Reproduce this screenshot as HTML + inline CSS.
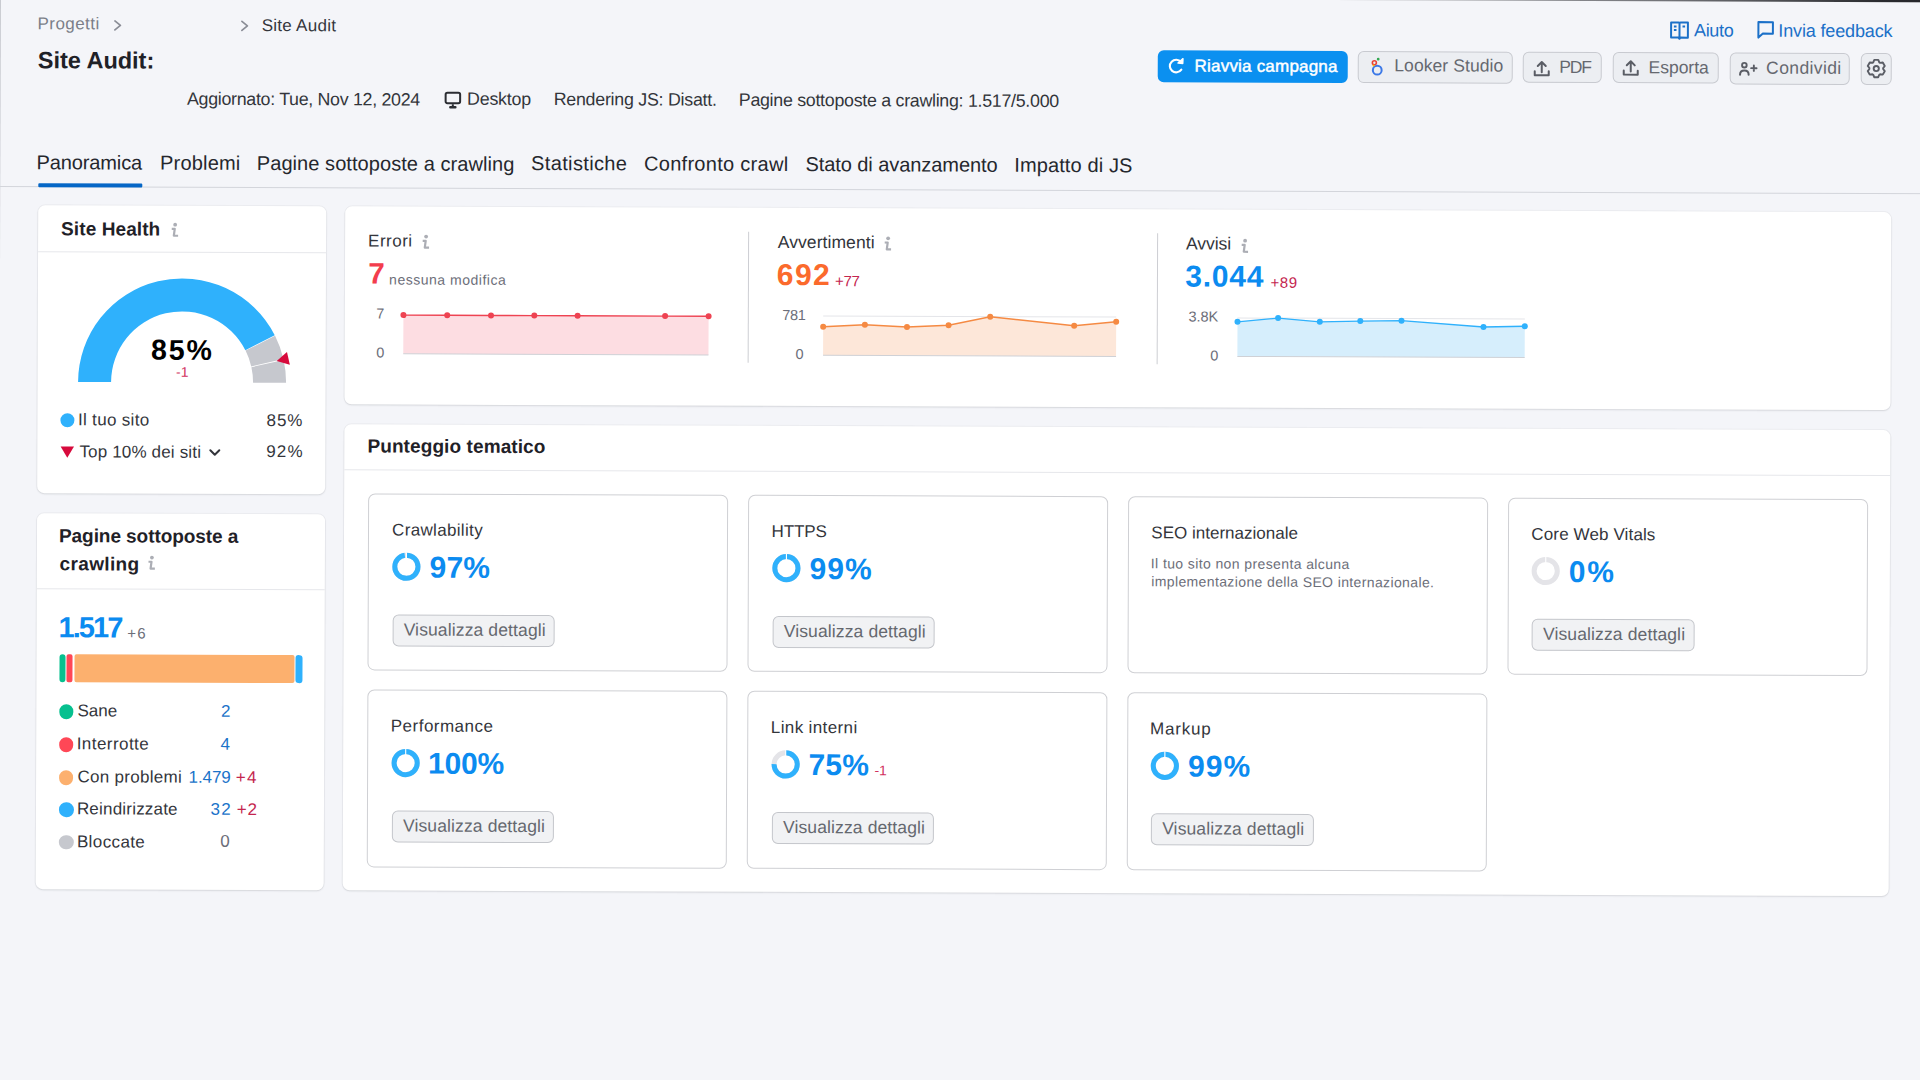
<!DOCTYPE html>
<html><head><meta charset="utf-8"><style>
html,body{margin:0;padding:0;width:1920px;height:1080px;overflow:hidden;background:#f4f5f9;}
#stage{position:absolute;left:0;top:0;width:1920px;height:1080px;transform:rotate(0.215deg);transform-origin:0 0;font-family:"Liberation Sans",sans-serif;background:#f4f5f9;}
.t{position:absolute;white-space:nowrap;line-height:1;}
</style></head><body><div id="stage">
<div style="position:absolute;left:-50.00px;top:-200.00px;width:2100.00px;height:194.60px;background:linear-gradient(90deg,#b8b9bd 0%,#a6a7ab 70%,#707176 82%,#2a2b2f 92%,#1a1a1e 100%);"></div>
<div style="position:absolute;left:0.00px;top:-10.00px;width:1.20px;height:1200.00px;background:#c9cbd1;"></div>
<div class="t" style="left:37.71px;top:15.35px;font-size:17px;color:#7b7e88;font-weight:400;letter-spacing:0.429px;">Progetti</div>
<svg style="position:absolute;left:113.07px;top:18.58px;overflow:visible;" width="10" height="12" viewBox="0 0 10 12"><polyline points="2,1.5 7.5,6 2,10.5" fill="none" stroke="#8a8d96" stroke-width="1.7" stroke-linecap="round" stroke-linejoin="round"/></svg>
<svg style="position:absolute;left:239.57px;top:18.60px;overflow:visible;" width="10" height="12" viewBox="0 0 10 12"><polyline points="2,1.5 7.5,6 2,10.5" fill="none" stroke="#8a8d96" stroke-width="1.7" stroke-linecap="round" stroke-linejoin="round"/></svg>
<div class="t" style="left:261.82px;top:15.74px;font-size:17px;color:#33353b;font-weight:400;letter-spacing:0.267px;">Site Audit</div>
<div class="t" style="left:38.06px;top:49.15px;font-size:23.5px;color:#1f2127;font-weight:700;letter-spacing:-0.020px;">Site Audit:</div>
<div class="t" style="left:187.40px;top:89.79px;font-size:17.8px;color:#33353b;font-weight:400;letter-spacing:-0.286px;">Aggiornato: Tue, Nov 12, 2024</div>
<svg style="position:absolute;left:445.35px;top:90.33px;overflow:visible;" width="17" height="18" viewBox="0 0 17 18"><rect x="1" y="1" width="14.5" height="10.5" rx="1.8" fill="none" stroke="#2b2d33" stroke-width="2"/><path d="M8.2 12.5 L8.2 14.5" stroke="#2b2d33" stroke-width="2"/><rect x="4.5" y="14.3" width="7.5" height="2.5" rx="1.2" fill="#2b2d33"/></svg>
<div class="t" style="left:467.40px;top:89.26px;font-size:17.8px;color:#33353b;font-weight:400;letter-spacing:-0.167px;">Desktop</div>
<div class="t" style="left:554.10px;top:89.05px;font-size:17.8px;color:#33353b;font-weight:400;letter-spacing:-0.240px;">Rendering JS: Disatt.</div>
<div class="t" style="left:739.20px;top:88.56px;font-size:17.8px;color:#33353b;font-weight:400;letter-spacing:-0.270px;">Pagine sottoposte a crawling: 1.517/5.000</div>
<svg style="position:absolute;left:1669.78px;top:14.74px;overflow:visible;" width="20" height="20" viewBox="0 0 20 20"><path d="M1.2 1.2 H8.6 Q9.6 1.2 9.6 2.2 V17.5 L8.6 16.3 H1.2 Z M18 1.2 H10.6 Q9.6 1.2 9.6 2.2 V17.5 L10.6 16.3 H18 Z" fill="none" stroke="#1b70c8" stroke-width="2" stroke-linejoin="round"/><path d="M4 5.2h2.6M4 8.7h2.6M12.6 5.2h2.6" stroke="#1b70c8" stroke-width="1.8"/></svg>
<div class="t" style="left:1694.14px;top:15.03px;font-size:18px;color:#1b70c8;font-weight:400;letter-spacing:-0.325px;">Aiuto</div>
<svg style="position:absolute;left:1757.08px;top:13.91px;overflow:visible;" width="18" height="20" viewBox="0 0 18 20"><path d="M1.5 1.5 H16 V13 H6 L1.5 17 Z" fill="none" stroke="#1b70c8" stroke-width="2" stroke-linejoin="round"/></svg>
<div class="t" style="left:1778.44px;top:14.77px;font-size:18px;color:#1b70c8;font-weight:400;letter-spacing:-0.146px;">Invia feedback</div>
<div style="position:absolute;left:1158.25px;top:46.30px;width:190.00px;height:32.00px;background:#0b90f0;border-radius:6px;"></div>
<svg style="position:absolute;left:1168.21px;top:52.62px;overflow:visible;" width="18" height="18" viewBox="0 0 18 18"><path d="M13.6 12.2 A6.3 6.3 0 1 1 13.2 4.6" fill="none" stroke="#fff" stroke-width="2.1" stroke-linecap="round"/><path d="M10.2 5.6 L15 6 L15.2 1.2 Z" fill="#fff" stroke="#fff" stroke-width="1.4" stroke-linejoin="round"/></svg>
<div class="t" style="left:1194.87px;top:52.86px;font-size:17px;color:#ffffff;font-weight:400;letter-spacing:0.200px;-webkit-text-stroke:0.45px #fff;">Riavvia campagna</div>
<div style="position:absolute;left:1358.25px;top:45.61px;width:155.00px;height:32.60px;background:#eceef2;border:1px solid #c8cad0;border-radius:6px;box-sizing:border-box;"></div>
<svg style="position:absolute;left:1369.71px;top:51.36px;overflow:visible;" width="18" height="22" viewBox="0 0 18 22"><circle cx="7.5" cy="14" r="4.4" fill="none" stroke="#3b78e7" stroke-width="2"/><circle cx="4.6" cy="6.6" r="2" fill="none" stroke="#ea4335" stroke-width="1.6"/><circle cx="8.4" cy="3" r="1.4" fill="#34a853"/><circle cx="3.8" cy="9.3" r="1" fill="#fbbc04"/></svg>
<div class="t" style="left:1394.57px;top:52.05px;font-size:17.5px;color:#65686f;font-weight:400;letter-spacing:0.075px;">Looker Studio</div>
<div style="position:absolute;left:1523.25px;top:46.14px;width:79.00px;height:31.30px;background:#eceef2;border:1px solid #c8cad0;border-radius:6px;box-sizing:border-box;"></div>
<svg style="position:absolute;left:1532.52px;top:53.55px;overflow:visible;" width="18" height="18" viewBox="0 0 18 18"><path d="M9 12.5 V2.2 M5 6.2 L9 2.2 L13 6.2" fill="none" stroke="#5a5d65" stroke-width="2" stroke-linecap="round" stroke-linejoin="round"/><path d="M2 11.5 V15.5 H16 V11.5" fill="none" stroke="#5a5d65" stroke-width="2" stroke-linecap="round" stroke-linejoin="round"/></svg>
<div class="t" style="left:1559.48px;top:52.77px;font-size:17.5px;color:#65686f;font-weight:400;letter-spacing:-1.150px;">PDF</div>
<div style="position:absolute;left:1612.76px;top:46.05px;width:106.50px;height:31.40px;background:#eceef2;border:1px solid #c8cad0;border-radius:6px;box-sizing:border-box;"></div>
<svg style="position:absolute;left:1621.62px;top:53.42px;overflow:visible;" width="18" height="18" viewBox="0 0 18 18"><path d="M9 12.5 V2.2 M5 6.2 L9 2.2 L13 6.2" fill="none" stroke="#5a5d65" stroke-width="2" stroke-linecap="round" stroke-linejoin="round"/><path d="M2 11.5 V15.5 H16 V11.5" fill="none" stroke="#5a5d65" stroke-width="2" stroke-linecap="round" stroke-linejoin="round"/></svg>
<div class="t" style="left:1648.88px;top:52.59px;font-size:17.5px;color:#65686f;font-weight:400;letter-spacing:-0.033px;">Esporta</div>
<div style="position:absolute;left:1730.26px;top:45.98px;width:120.00px;height:31.70px;background:#eceef2;border:1px solid #c8cad0;border-radius:6px;box-sizing:border-box;"></div>
<svg style="position:absolute;left:1738.73px;top:54.98px;overflow:visible;" width="22" height="18" viewBox="0 0 22 18"><circle cx="5.6" cy="3.6" r="2.3" fill="none" stroke="#5a5d65" stroke-width="1.9"/><path d="M1.3 13.2 Q1.3 8.9 5.6 8.9 Q9.9 8.9 9.9 13.2" fill="none" stroke="#5a5d65" stroke-width="2" stroke-linecap="round"/><path d="M15.1 3.9 V9.3 M12.4 6.6 H17.8" stroke="#5a5d65" stroke-width="1.9" stroke-linecap="round"/></svg>
<div class="t" style="left:1766.38px;top:52.52px;font-size:17.5px;color:#65686f;font-weight:400;letter-spacing:0.387px;">Condividi</div>
<div style="position:absolute;left:1860.66px;top:45.66px;width:31.60px;height:32.10px;background:#eceef2;border:1px solid #c8cad0;border-radius:6px;box-sizing:border-box;"></div>
<svg style="position:absolute;left:1866.92px;top:52.30px;overflow:visible;" width="19" height="19" viewBox="0 0 19 19"><path d="M6.48 3.30 L7.50 0.83 L11.50 0.83 L12.52 3.30 L13.36 3.78 L16.01 3.43 L18.01 6.90 L16.38 9.02 L16.38 9.98 L18.01 12.10 L16.01 15.57 L13.36 15.22 L12.52 15.70 L11.50 18.17 L7.50 18.17 L6.48 15.70 L5.64 15.22 L2.99 15.57 L0.99 12.10 L2.62 9.98 L2.62 9.02 L0.99 6.90 L2.99 3.43 L5.64 3.78 Z" fill="none" stroke="#5a5d65" stroke-width="1.9" stroke-linejoin="round"/><circle cx="9.5" cy="9.5" r="2.6" fill="none" stroke="#5a5d65" stroke-width="1.9"/></svg>
<div class="t" style="left:37.13px;top:151.73px;font-size:20px;color:#25272d;font-weight:400;letter-spacing:-0.111px;">Panoramica</div>
<div class="t" style="left:160.64px;top:151.62px;font-size:20px;color:#25272d;font-weight:400;letter-spacing:0.200px;">Problemi</div>
<div class="t" style="left:257.44px;top:151.62px;font-size:20px;color:#25272d;font-weight:400;letter-spacing:0.067px;">Pagine sottoposte a crawling</div>
<div class="t" style="left:531.74px;top:151.40px;font-size:20px;color:#25272d;font-weight:400;letter-spacing:0.360px;">Statistiche</div>
<div class="t" style="left:644.64px;top:151.38px;font-size:20px;color:#25272d;font-weight:400;letter-spacing:0.293px;">Confronto crawl</div>
<div class="t" style="left:806.04px;top:151.29px;font-size:20px;color:#25272d;font-weight:400;letter-spacing:-0.063px;">Stato di avanzamento</div>
<div class="t" style="left:1014.85px;top:151.14px;font-size:20px;color:#25272d;font-weight:400;letter-spacing:0.125px;">Impatto di JS</div>
<div style="position:absolute;left:0.00px;top:185.60px;width:1960.00px;height:1.20px;background:#d3d5db;"></div>
<div style="position:absolute;left:38.70px;top:183.40px;width:104.00px;height:3.20px;background:#0566c6;border-radius:1px;"></div>
<div style="position:absolute;left:38.60px;top:205.00px;width:288.00px;height:287.80px;background:#fff;border-radius:7px;box-shadow:0 0 0 1px rgba(20,25,40,0.035),0 1px 2px rgba(20,25,40,0.10);"></div>
<div class="t" style="left:61.98px;top:218.90px;font-size:19px;color:#1f2127;font-weight:700;letter-spacing:0.090px;">Site Health</div>
<svg style="position:absolute;left:169.64px;top:219.94px;overflow:visible" width="12" height="18"><circle cx="6" cy="4" r="1.9" fill="#acaeb5"/><path d="M2.6 8.2 H5.6 L4.7 15.1 H9" fill="none" stroke="#acaeb5" stroke-width="2.2" stroke-linejoin="round"/></svg>
<div style="position:absolute;left:38.60px;top:251.40px;width:288.00px;height:1.00px;background:#e6e7eb;"></div>
<svg style="position:absolute;left:0;top:0;overflow:visible" width="400" height="500"><path d="M79.50 381.70 A104 104 0 0 1 276.00 334.16 L246.65 349.25 A71 71 0 0 0 112.50 381.70 Z" fill="#2fb1fc"/><path d="M276.33 334.81 A104 104 0 0 1 284.75 357.95 L252.62 365.49 A71 71 0 0 0 246.87 349.69 Z" fill="#c6c8ce"/><path d="M285.00 359.01 A104 104 0 0 1 287.50 381.70 L254.50 381.70 A71 71 0 0 0 252.79 366.21 Z" fill="#c6c8ce"/><path d="M278.05 360.04 L288.30 351.03 L291.20 363.70 Z" fill="#d70a3c"/></svg>
<div class="t" style="left:152.25px;top:334.79px;font-size:28.5px;color:#000;font-weight:700;letter-spacing:1.900px;">85%</div>
<div class="t" style="left:177.31px;top:364.47px;font-size:14px;color:#d1315e;font-weight:400;letter-spacing:0.300px;">-1</div>
<div style="position:absolute;left:61.90px;top:412.50px;width:14.20px;height:14.20px;background:#2fb1fc;border-radius:50%;"></div>
<div class="t" style="left:79.50px;top:411.18px;font-size:17px;color:#33353b;font-weight:400;letter-spacing:0.320px;">Il tuo sito</div>
<div class="t" style="left:268.20px;top:410.54px;font-size:17px;color:#33353b;font-weight:400;letter-spacing:0.900px;">85%</div>
<svg style="position:absolute;left:61.97px;top:445.97px;overflow:visible;" width="14" height="12" viewBox="0 0 14 12"><path d="M0.3 0.3 H13.7 L7 11.5 Z" fill="#d70a3c"/></svg>
<div class="t" style="left:81.12px;top:442.78px;font-size:17px;color:#33353b;font-weight:400;letter-spacing:0.167px;">Top 10% dei siti</div>
<svg style="position:absolute;left:210.18px;top:447.22px;overflow:visible;" width="13" height="10" viewBox="0 0 13 10"><polyline points="2,2.5 6.5,7 11,2.5" fill="none" stroke="#33353b" stroke-width="2" stroke-linecap="round" stroke-linejoin="round"/></svg>
<div class="t" style="left:267.92px;top:442.24px;font-size:17px;color:#33353b;font-weight:400;letter-spacing:1.200px;">92%</div>
<div style="position:absolute;left:38.80px;top:512.90px;width:288.00px;height:376.30px;background:#fff;border-radius:7px;box-shadow:0 0 0 1px rgba(20,25,40,0.035),0 1px 2px rgba(20,25,40,0.10);"></div>
<div class="t" style="left:61.04px;top:526.26px;font-size:19px;color:#1f2127;font-weight:700;letter-spacing:-0.067px;">Pagine sottoposte a</div>
<div class="t" style="left:61.74px;top:553.54px;font-size:19px;color:#1f2127;font-weight:700;letter-spacing:0.343px;">crawling</div>
<svg style="position:absolute;left:148.49px;top:552.73px;overflow:visible" width="12" height="18"><circle cx="6" cy="4" r="1.9" fill="#acaeb5"/><path d="M2.6 8.2 H5.6 L4.7 15.1 H9" fill="none" stroke="#acaeb5" stroke-width="2.2" stroke-linejoin="round"/></svg>
<div style="position:absolute;left:38.80px;top:587.60px;width:288.00px;height:1.00px;background:#e6e7eb;"></div>
<div class="t" style="left:60.89px;top:613.31px;font-size:29px;color:#0b8bf0;font-weight:700;letter-spacing:-1.950px;">1.517</div>
<div class="t" style="left:129.69px;top:624.99px;font-size:15px;color:#6c6e79;font-weight:400;letter-spacing:1.200px;">+6</div>
<div style="position:absolute;left:61.90px;top:653.80px;width:6.60px;height:28.00px;background:#06c08f;border-radius:3px;"></div>
<div style="position:absolute;left:69.40px;top:653.80px;width:5.90px;height:28.00px;background:#ff4756;border-radius:2px;"></div>
<div style="position:absolute;left:76.90px;top:653.80px;width:220.20px;height:28.00px;background:#fcb06e;border-radius:2px;"></div>
<div style="position:absolute;left:298.20px;top:653.80px;width:6.90px;height:28.00px;background:#2fb1fc;border-radius:3px;"></div>
<div style="position:absolute;left:61.57px;top:704.15px;width:14.60px;height:14.60px;background:#06c08f;border-radius:50%;"></div>
<div class="t" style="left:80.19px;top:702.44px;font-size:17px;color:#33353b;font-weight:400;letter-spacing:-0.033px;">Sane</div>
<div class="t" style="left:223.79px;top:701.96px;font-size:17px;color:#1a73c9;font-weight:400;letter-spacing:0.000px;">2</div>
<div style="position:absolute;left:61.69px;top:737.25px;width:14.60px;height:14.60px;background:#ff4756;border-radius:50%;"></div>
<div class="t" style="left:79.52px;top:735.48px;font-size:17px;color:#33353b;font-weight:400;letter-spacing:0.444px;">Interrotte</div>
<div class="t" style="left:223.42px;top:735.06px;font-size:17px;color:#1a73c9;font-weight:400;letter-spacing:0.000px;">4</div>
<div style="position:absolute;left:61.82px;top:769.95px;width:14.60px;height:14.60px;background:#fcb06e;border-radius:50%;"></div>
<div class="t" style="left:80.34px;top:768.12px;font-size:17px;color:#33353b;font-weight:400;letter-spacing:0.291px;">Con problemi</div>
<div class="t" style="left:191.44px;top:767.82px;font-size:17px;color:#1a73c9;font-weight:400;letter-spacing:-0.075px;">1.479</div>
<div class="t" style="left:238.64px;top:767.69px;font-size:17px;color:#c4264f;font-weight:400;letter-spacing:1.400px;">+4</div>
<div style="position:absolute;left:61.94px;top:802.05px;width:14.60px;height:14.60px;background:#2fb1fc;border-radius:50%;"></div>
<div class="t" style="left:79.96px;top:800.23px;font-size:17px;color:#33353b;font-weight:400;letter-spacing:0.200px;">Reindirizzate</div>
<div class="t" style="left:213.56px;top:799.88px;font-size:17px;color:#1a73c9;font-weight:400;letter-spacing:1.400px;">32</div>
<div class="t" style="left:239.76px;top:799.78px;font-size:17px;color:#c4264f;font-weight:400;letter-spacing:0.800px;">+2</div>
<div style="position:absolute;left:62.06px;top:834.55px;width:14.60px;height:14.60px;background:#c6c8ce;border-radius:50%;"></div>
<div class="t" style="left:80.08px;top:832.79px;font-size:17px;color:#33353b;font-weight:400;letter-spacing:0.386px;">Bloccate</div>
<div class="t" style="left:223.48px;top:832.36px;font-size:17px;color:#6c6e79;font-weight:400;letter-spacing:0.000px;">0</div>
<div style="position:absolute;left:346.30px;top:205.30px;width:1546.00px;height:198.00px;background:#fff;border-radius:7px;box-shadow:0 0 0 1px rgba(20,25,40,0.035),0 1px 2px rgba(20,25,40,0.10);"></div>
<div class="t" style="left:369.03px;top:231.15px;font-size:17px;color:#33353b;font-weight:400;letter-spacing:0.500px;">Errori</div>
<svg style="position:absolute;left:420.69px;top:230.50px;overflow:visible" width="12" height="18"><circle cx="6" cy="4" r="1.9" fill="#acaeb5"/><path d="M2.6 8.2 H5.6 L4.7 15.1 H9" fill="none" stroke="#acaeb5" stroke-width="2.2" stroke-linejoin="round"/></svg>
<div class="t" style="left:369.26px;top:257.33px;font-size:29.6px;color:#f33d4d;font-weight:700;letter-spacing:0.000px;">7</div>
<div class="t" style="left:390.17px;top:270.67px;font-size:14px;color:#6c6e79;font-weight:400;letter-spacing:0.513px;">nessuna modifica</div>
<div class="t" style="left:778.73px;top:231.09px;font-size:17.5px;color:#33353b;font-weight:400;letter-spacing:0.073px;">Avvertimenti</div>
<svg style="position:absolute;left:882.59px;top:231.17px;overflow:visible" width="12" height="18"><circle cx="6" cy="4" r="1.9" fill="#acaeb5"/><path d="M2.6 8.2 H5.6 L4.7 15.1 H9" fill="none" stroke="#acaeb5" stroke-width="2.2" stroke-linejoin="round"/></svg>
<div class="t" style="left:777.77px;top:257.39px;font-size:30px;color:#fb6a2c;font-weight:700;letter-spacing:1.500px;">692</div>
<div class="t" style="left:836.17px;top:269.92px;font-size:15px;color:#c4264f;font-weight:400;letter-spacing:-0.400px;">+77</div>
<div class="t" style="left:1186.84px;top:230.85px;font-size:17.5px;color:#33353b;font-weight:400;letter-spacing:-0.020px;">Avvisi</div>
<svg style="position:absolute;left:1239.90px;top:231.63px;overflow:visible" width="12" height="18"><circle cx="6" cy="4" r="1.9" fill="#acaeb5"/><path d="M2.6 8.2 H5.6 L4.7 15.1 H9" fill="none" stroke="#acaeb5" stroke-width="2.2" stroke-linejoin="round"/></svg>
<div class="t" style="left:1186.28px;top:257.21px;font-size:30px;color:#0b8bf0;font-weight:700;letter-spacing:0.775px;">3.044</div>
<div class="t" style="left:1271.68px;top:269.69px;font-size:15px;color:#c4264f;font-weight:400;letter-spacing:0.500px;">+89</div>
<div style="position:absolute;left:749.10px;top:229.00px;width:1.10px;height:131.20px;background:#cdced3;"></div>
<div style="position:absolute;left:1157.90px;top:229.20px;width:1.10px;height:131.20px;background:#cdced3;"></div>
<svg style="position:absolute;left:0;top:0;overflow:visible" width="10" height="10"><polygon points="404.60,352.3 404.60,313.60 448.40,313.60 492.20,313.60 535.50,313.60 578.80,313.60 666.30,313.60 709.80,313.60 709.80,352.3" fill="#fddde2"/><line x1="404.6" y1="352.3" x2="709.8" y2="352.3" stroke="#cfd1d6" stroke-width="1"/><polyline points="404.60,313.60 448.40,313.60 492.20,313.60 535.50,313.60 578.80,313.60 666.30,313.60 709.80,313.60" fill="none" stroke="#ee4352" stroke-width="1.4"/><circle cx="404.60" cy="313.60" r="3" fill="#ee4352"/><circle cx="448.40" cy="313.60" r="3" fill="#ee4352"/><circle cx="492.20" cy="313.60" r="3" fill="#ee4352"/><circle cx="535.50" cy="313.60" r="3" fill="#ee4352"/><circle cx="578.80" cy="313.60" r="3" fill="#ee4352"/><circle cx="666.30" cy="313.60" r="3" fill="#ee4352"/><circle cx="709.80" cy="313.60" r="3" fill="#ee4352"/></svg>
<div class="t" style="left:377.50px;top:305.30px;font-size:14.5px;color:#6c6e79;font-weight:400;letter-spacing:0.000px;">7</div>
<div class="t" style="left:377.54px;top:343.80px;font-size:14.5px;color:#6c6e79;font-weight:400;letter-spacing:0.000px;">0</div>
<svg style="position:absolute;left:0;top:0;overflow:visible" width="10" height="10"><line x1="824.4" y1="312.9" x2="1117.4" y2="312.9" stroke="#e4e5e9" stroke-width="1"/><polygon points="824.40,352.2 824.40,323.70 866.10,321.50 908.20,323.60 949.80,321.70 991.40,313.10 1075.40,321.70 1117.40,317.50 1117.40,352.2" fill="#fde7d9"/><line x1="824.4" y1="352.2" x2="1117.4" y2="352.2" stroke="#cfd1d6" stroke-width="1"/><polyline points="824.40,323.70 866.10,321.50 908.20,323.60 949.80,321.70 991.40,313.10 1075.40,321.70 1117.40,317.50" fill="none" stroke="#f58a43" stroke-width="1.4"/><circle cx="824.40" cy="323.70" r="3" fill="#f58a43"/><circle cx="866.10" cy="321.50" r="3" fill="#f58a43"/><circle cx="908.20" cy="323.60" r="3" fill="#f58a43"/><circle cx="949.80" cy="321.70" r="3" fill="#f58a43"/><circle cx="991.40" cy="313.10" r="3" fill="#f58a43"/><circle cx="1075.40" cy="321.70" r="3" fill="#f58a43"/><circle cx="1117.40" cy="317.50" r="3" fill="#f58a43"/></svg>
<div class="t" style="left:783.50px;top:305.35px;font-size:14.5px;color:#6c6e79;font-weight:400;letter-spacing:-0.400px;">781</div>
<div class="t" style="left:796.75px;top:344.22px;font-size:14.5px;color:#6c6e79;font-weight:400;letter-spacing:0.000px;">0</div>
<svg style="position:absolute;left:0;top:0;overflow:visible" width="10" height="10"><line x1="1238.7" y1="313.35" x2="1526" y2="313.35" stroke="#e4e5e9" stroke-width="1"/><polygon points="1238.70,351.8 1238.70,317.20 1279.30,313.30 1321.00,316.90 1361.50,316.00 1402.70,315.40 1484.70,321.50 1526.00,320.60 1526.00,351.8" fill="#d6eefc"/><line x1="1238.7" y1="351.8" x2="1526" y2="351.8" stroke="#cfd1d6" stroke-width="1"/><polyline points="1238.70,317.20 1279.30,313.30 1321.00,316.90 1361.50,316.00 1402.70,315.40 1484.70,321.50 1526.00,320.60" fill="none" stroke="#2fb1fc" stroke-width="1.4"/><circle cx="1238.70" cy="317.20" r="3" fill="#2fb1fc"/><circle cx="1279.30" cy="313.30" r="3" fill="#2fb1fc"/><circle cx="1321.00" cy="316.90" r="3" fill="#2fb1fc"/><circle cx="1361.50" cy="316.00" r="3" fill="#2fb1fc"/><circle cx="1402.70" cy="315.40" r="3" fill="#2fb1fc"/><circle cx="1484.70" cy="321.50" r="3" fill="#2fb1fc"/><circle cx="1526.00" cy="320.60" r="3" fill="#2fb1fc"/></svg>
<div class="t" style="left:1189.71px;top:305.01px;font-size:14.5px;color:#6c6e79;font-weight:400;letter-spacing:-0.067px;">3.8K</div>
<div class="t" style="left:1211.66px;top:344.47px;font-size:14.5px;color:#6c6e79;font-weight:400;letter-spacing:0.000px;">0</div>
<div style="position:absolute;left:346.30px;top:422.70px;width:1546.00px;height:466.70px;background:#fff;border-radius:7px;box-shadow:0 0 0 1px rgba(20,25,40,0.035),0 1px 2px rgba(20,25,40,0.10);"></div>
<div class="t" style="left:369.10px;top:435.40px;font-size:19px;color:#1f2127;font-weight:700;letter-spacing:0.100px;">Punteggio tematico</div>
<div style="position:absolute;left:346.30px;top:468.30px;width:1546.00px;height:1.00px;background:#e6e7eb;"></div>
<div style="position:absolute;left:370.40px;top:492.10px;width:360.00px;height:176.80px;border:1px solid #cfd0d4;border-radius:7px;box-sizing:border-box;background:#fff;"></div>
<div class="t" style="left:394.06px;top:520.06px;font-size:17px;color:#33353b;font-weight:400;letter-spacing:0.336px;">Crawlability</div>
<svg style="position:absolute;left:0;top:0;overflow:visible" width="10" height="10"><circle cx="408.52" cy="565.21" r="11.6" fill="none" stroke="#e4e4e8" stroke-width="5.0"/><circle cx="408.52" cy="565.21" r="11.6" fill="none" stroke="#2fb1fc" stroke-width="5.0" stroke-dasharray="70.70 72.88" transform="rotate(-90 408.52 565.21)"/><line x1="408.52" y1="550.61" x2="408.52" y2="556.61" stroke="#fff" stroke-width="1.1"/></svg>
<div class="t" style="left:431.72px;top:550.57px;font-size:30px;color:#0b8bf0;font-weight:700;letter-spacing:0.150px;">97%</div>
<div style="position:absolute;left:395.11px;top:612.91px;width:162.30px;height:32.20px;background:#f1f2f4;border:1px solid #c4c6cb;border-radius:6px;box-sizing:border-box;"></div>
<div class="t" style="left:406.03px;top:619.70px;font-size:17.5px;color:#65686f;font-weight:400;letter-spacing:0.128px;">Visualizza dettagli</div>
<div style="position:absolute;left:750.40px;top:492.10px;width:360.00px;height:176.80px;border:1px solid #cfd0d4;border-radius:7px;box-sizing:border-box;background:#fff;"></div>
<div class="t" style="left:773.56px;top:520.13px;font-size:17px;color:#33353b;font-weight:400;letter-spacing:-0.125px;">HTTPS</div>
<svg style="position:absolute;left:0;top:0;overflow:visible" width="10" height="10"><circle cx="788.53" cy="565.21" r="11.6" fill="none" stroke="#e4e4e8" stroke-width="5.0"/><circle cx="788.53" cy="565.21" r="11.6" fill="none" stroke="#2fb1fc" stroke-width="5.0" stroke-dasharray="72.16 72.88" transform="rotate(-90 788.53 565.21)"/><line x1="788.53" y1="550.61" x2="788.53" y2="556.61" stroke="#fff" stroke-width="1.1"/></svg>
<div class="t" style="left:811.72px;top:550.57px;font-size:30px;color:#0b8bf0;font-weight:700;letter-spacing:1.000px;">99%</div>
<div style="position:absolute;left:775.12px;top:612.91px;width:162.30px;height:32.20px;background:#f1f2f4;border:1px solid #c4c6cb;border-radius:6px;box-sizing:border-box;"></div>
<div class="t" style="left:786.04px;top:619.70px;font-size:17.5px;color:#65686f;font-weight:400;letter-spacing:0.128px;">Visualizza dettagli</div>
<div style="position:absolute;left:1129.60px;top:492.10px;width:360.00px;height:176.80px;border:1px solid #cfd0d4;border-radius:7px;box-sizing:border-box;background:#fff;"></div>
<div class="t" style="left:1153.37px;top:519.95px;font-size:17px;color:#33353b;font-weight:400;letter-spacing:0.006px;">SEO internazionale</div>
<div class="t" style="left:1152.98px;top:551.89px;font-size:14px;color:#6c6e79;font-weight:400;letter-spacing:0.390px;">Il tuo sito non presenta alcuna</div>
<div class="t" style="left:1153.45px;top:570.24px;font-size:14px;color:#6c6e79;font-weight:400;letter-spacing:0.375px;">implementazione della SEO internazionale.</div>
<div style="position:absolute;left:1509.70px;top:492.10px;width:360.00px;height:176.80px;border:1px solid #cfd0d4;border-radius:7px;box-sizing:border-box;background:#fff;"></div>
<div class="t" style="left:1533.38px;top:520.00px;font-size:17px;color:#33353b;font-weight:400;letter-spacing:0.129px;">Core Web Vitals</div>
<svg style="position:absolute;left:0;top:0;overflow:visible" width="10" height="10"><circle cx="1547.84" cy="565.21" r="11.6" fill="none" stroke="#e4e4e8" stroke-width="5.0"/><line x1="1547.84" y1="550.61" x2="1547.84" y2="556.61" stroke="#fff" stroke-width="1.1"/></svg>
<div class="t" style="left:1570.83px;top:550.60px;font-size:30px;color:#0b8bf0;font-weight:700;letter-spacing:1.800px;">0%</div>
<div style="position:absolute;left:1534.43px;top:612.91px;width:162.30px;height:32.20px;background:#f1f2f4;border:1px solid #c4c6cb;border-radius:6px;box-sizing:border-box;"></div>
<div class="t" style="left:1545.35px;top:619.70px;font-size:17.5px;color:#65686f;font-weight:400;letter-spacing:0.128px;">Visualizza dettagli</div>
<div style="position:absolute;left:370.40px;top:688.40px;width:360.00px;height:177.30px;border:1px solid #cfd0d4;border-radius:7px;box-sizing:border-box;background:#fff;"></div>
<div class="t" style="left:393.56px;top:716.34px;font-size:17px;color:#33353b;font-weight:400;letter-spacing:0.480px;">Performance</div>
<svg style="position:absolute;left:0;top:0;overflow:visible" width="10" height="10"><circle cx="408.52" cy="761.52" r="11.6" fill="none" stroke="#e4e4e8" stroke-width="5.0"/><circle cx="408.52" cy="761.52" r="11.6" fill="none" stroke="#2fb1fc" stroke-width="5.0" stroke-dasharray="72.88 72.88" transform="rotate(-90 408.52 761.52)"/><line x1="408.52" y1="746.92" x2="408.52" y2="752.92" stroke="#fff" stroke-width="1.1"/></svg>
<div class="t" style="left:430.82px;top:746.84px;font-size:30px;color:#0b8bf0;font-weight:700;letter-spacing:-0.133px;">100%</div>
<div style="position:absolute;left:395.11px;top:809.21px;width:162.30px;height:32.20px;background:#f1f2f4;border:1px solid #c4c6cb;border-radius:6px;box-sizing:border-box;"></div>
<div class="t" style="left:406.03px;top:816.00px;font-size:17.5px;color:#65686f;font-weight:400;letter-spacing:0.128px;">Visualizza dettagli</div>
<div style="position:absolute;left:750.40px;top:688.40px;width:360.00px;height:177.30px;border:1px solid #cfd0d4;border-radius:7px;box-sizing:border-box;background:#fff;"></div>
<div class="t" style="left:773.56px;top:716.37px;font-size:17px;color:#33353b;font-weight:400;letter-spacing:0.382px;">Link interni</div>
<svg style="position:absolute;left:0;top:0;overflow:visible" width="10" height="10"><circle cx="788.53" cy="761.52" r="11.6" fill="none" stroke="#e4e4e8" stroke-width="5.0"/><circle cx="788.53" cy="761.52" r="11.6" fill="none" stroke="#2fb1fc" stroke-width="5.0" stroke-dasharray="54.66 72.88" transform="rotate(-90 788.53 761.52)"/><line x1="788.53" y1="746.92" x2="788.53" y2="752.92" stroke="#fff" stroke-width="1.1"/></svg>
<div class="t" style="left:811.42px;top:746.87px;font-size:30px;color:#0b8bf0;font-weight:700;letter-spacing:0.150px;">75%</div>
<div class="t" style="left:877.42px;top:760.26px;font-size:14px;color:#d1315e;font-weight:400;letter-spacing:-0.200px;">-1</div>
<div style="position:absolute;left:775.12px;top:809.21px;width:162.30px;height:32.20px;background:#f1f2f4;border:1px solid #c4c6cb;border-radius:6px;box-sizing:border-box;"></div>
<div class="t" style="left:786.04px;top:816.00px;font-size:17.5px;color:#65686f;font-weight:400;letter-spacing:0.128px;">Visualizza dettagli</div>
<div style="position:absolute;left:1129.60px;top:688.40px;width:360.00px;height:177.30px;border:1px solid #cfd0d4;border-radius:7px;box-sizing:border-box;background:#fff;"></div>
<div class="t" style="left:1152.77px;top:716.42px;font-size:17px;color:#33353b;font-weight:400;letter-spacing:0.800px;">Markup</div>
<svg style="position:absolute;left:0;top:0;overflow:visible" width="10" height="10"><circle cx="1167.73" cy="761.52" r="11.6" fill="none" stroke="#e4e4e8" stroke-width="5.0"/><circle cx="1167.73" cy="761.52" r="11.6" fill="none" stroke="#2fb1fc" stroke-width="5.0" stroke-dasharray="72.16 72.88" transform="rotate(-90 1167.73 761.52)"/><line x1="1167.73" y1="746.92" x2="1167.73" y2="752.92" stroke="#fff" stroke-width="1.1"/></svg>
<div class="t" style="left:1190.93px;top:746.87px;font-size:30px;color:#0b8bf0;font-weight:700;letter-spacing:1.050px;">99%</div>
<div style="position:absolute;left:1154.33px;top:809.21px;width:162.30px;height:32.20px;background:#f1f2f4;border:1px solid #c4c6cb;border-radius:6px;box-sizing:border-box;"></div>
<div class="t" style="left:1165.25px;top:816.00px;font-size:17.5px;color:#65686f;font-weight:400;letter-spacing:0.128px;">Visualizza dettagli</div>
</div></body></html>
